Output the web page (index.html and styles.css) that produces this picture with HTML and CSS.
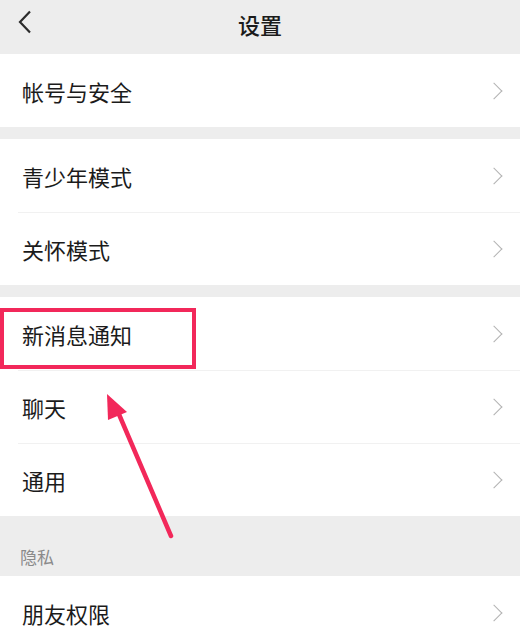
FILE: index.html
```html
<!DOCTYPE html>
<html lang="zh-CN">
<head>
<meta charset="UTF-8" />
<meta name="viewport" content="width=device-width, initial-scale=1" />
<title>设置</title>
<link rel="stylesheet" href="styles.css">
</head>
<body>
  <div class="page">
    <div class="nav-bar">
      <svg class="back" width="14" height="24" viewBox="0 0 14 24">
        <path d="M12 1.5 L2 12 L12 22.5" fill="none" stroke="#2b2b2b" stroke-width="2.2" />
      </svg>
      <span class="nav-title">设置</span>
    </div>

    <div class="group">
      <div class="row"><span>帐号与安全</span><i class="chevron"></i></div>
    </div>

    <div class="group">
      <div class="row"><span>青少年模式</span><i class="chevron"></i></div>
      <div class="row"><span>关怀模式</span><i class="chevron"></i></div>
    </div>

    <div class="group">
      <div class="row"><span>新消息通知</span><i class="chevron"></i></div>
      <div class="row"><span>聊天</span><i class="chevron"></i></div>
      <div class="row"><span>通用</span><i class="chevron"></i></div>
    </div>

    <div class="section-label">隐私</div>

    <div class="group flush">
      <div class="row"><span>朋友权限</span><i class="chevron"></i></div>
    </div>

    <!-- annotation overlay -->
    <div class="highlight"></div>
    <svg class="pointer" width="520" height="638" viewBox="0 0 520 638">
      <line x1="171" y1="536" x2="118" y2="412" stroke="#f2285a" stroke-width="4.5" stroke-linecap="round" />
      <polygon points="107,394 127,412 108,420" fill="#f2285a" />
    </svg>
  </div>
</body>
</html>
```

FILE: styles.css
```css
body {
  margin: 0;
  font-family: "Noto Sans CJK SC", "Noto Sans", sans-serif;
  background: #ededed;
  color: #1b1b1b;
}

.page {
  position: relative;
  width: 520px;
  height: 638px;
  overflow: hidden;
  background: #ededed;
}

.nav-bar {
  height: 54px;
  display: flex;
  align-items: center;
  justify-content: center;
  position: relative;
}

.back {
  position: absolute;
  left: 18px;
  top: 10px;
}

.nav-title {
  font-size: 22px;
  font-weight: 500;
  color: #1b1b1b;
  margin-top: -7px;
}

.group {
  background: #fff;
  margin-bottom: 12px;
}

.group.flush {
  margin-bottom: 0;
}

.row {
  height: 73px;
  display: flex;
  align-items: center;
  justify-content: space-between;
  padding: 0 20px 0 22px;
  font-size: 22px;
  position: relative;
}

.row + .row::before {
  content: "";
  position: absolute;
  top: 0;
  left: 18px;
  right: 0;
  border-top: 1px solid #f1f1f1;
}

.chevron {
  width: 11px;
  height: 11px;
  border-top: 1.6px solid #b3b3b3;
  border-right: 1.6px solid #b3b3b3;
  transform: rotate(45deg);
}

.section-label {
  height: 48px;
  padding: 0 0 0 20px;
  display: flex;
  align-items: flex-end;
  font-size: 17px;
  color: #8a8a8a;
  margin-top: -12px;
  padding-bottom: 7px;
  padding-top: 5px;
}

.highlight {
  position: absolute;
  left: 0;
  top: 308px;
  width: 188px;
  height: 53px;
  border: 4px solid #f2285a;
}

.pointer {
  position: absolute;
  left: 0;
  top: 0;
}
```
